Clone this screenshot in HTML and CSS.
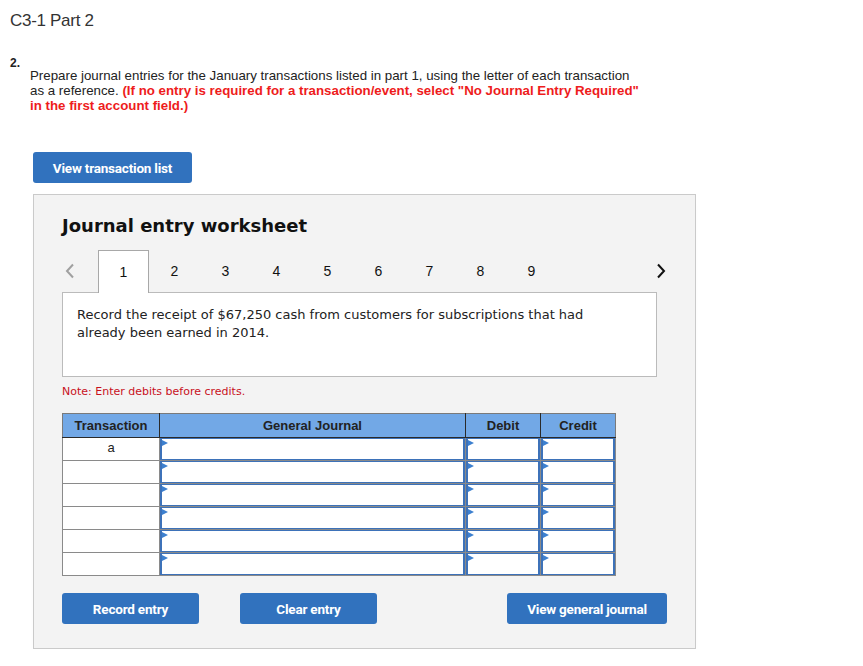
FILE: index.html
```html
<!DOCTYPE html>
<html>

<head>
    <link rel="stylesheet" href="styles.css">
</head>

<body>
    <h1 class="title">C3-1 Part 2</h1>

    <div class="question">
        <div class="qnum">2.</div>
        <p class="qtext">Prepare journal entries for the January transactions listed in part 1, using the letter of each transaction<br>
            as a reference. <strong class="warn">(If no entry is required for a transaction/event, select "No Journal Entry Required"<br>
            in the first account field.)</strong></p>
    </div>

    <button class="btn btn-list">View transaction list</button>

    <div class="worksheet">
        <h2 class="ws-title">Journal entry worksheet</h2>

        <div class="tabs">
            <span class="arrow prev">
                <svg width="10" height="16" viewBox="0 0 10 16"><polyline points="8,1.5 2,8 8,14.5" fill="none" stroke="#a0a0a0" stroke-width="2"/></svg>
            </span>
            <span class="tab active">1</span>
            <span class="tab">2</span>
            <span class="tab">3</span>
            <span class="tab">4</span>
            <span class="tab">5</span>
            <span class="tab">6</span>
            <span class="tab">7</span>
            <span class="tab">8</span>
            <span class="tab">9</span>
            <span class="arrow next">
                <svg width="10" height="16" viewBox="0 0 10 16"><polyline points="2,1.5 8,8 2,14.5" fill="none" stroke="#111" stroke-width="2"/></svg>
            </span>
        </div>

        <div class="task">
            Record the receipt of $67,250 cash from customers for subscriptions that had<br>
            already been earned in 2014.
        </div>

        <div class="note">Note: Enter debits before credits.</div>

        <table class="journal">
            <thead>
                <tr>
                    <th class="c-trans">Transaction</th>
                    <th class="c-acct">General Journal</th>
                    <th class="c-amt">Debit</th>
                    <th class="c-amt">Credit</th>
                </tr>
            </thead>
            <tbody id="rows"></tbody>
        </table>

        <div class="actions">
            <button class="btn">Record entry</button>
            <button class="btn">Clear entry</button>
            <button class="btn btn-right">View general journal</button>
        </div>
    </div>

    <script>
        const rows = document.getElementById('rows');
        for (let i = 0; i < 6; i++) {
            const tr = document.createElement('tr');
            tr.innerHTML =
                '<td class="trans">' + (i === 0 ? 'a' : '') + '</td>' +
                '<td class="cell"><div class="field"></div></td>' +
                '<td class="cell"><div class="field"></div></td>' +
                '<td class="cell"><div class="field"></div></td>';
            rows.appendChild(tr);
        }
    </script>
</body>

</html>
```

FILE: styles.css
```css
body {
    margin: 0;
    font-family: "Liberation Sans", Arial, sans-serif;
    color: #222;
    background: #fff;
}

.title {
    margin: 0;
    padding: 10px 0 0 10px;
    font-size: 17px;
    font-weight: normal;
    line-height: 22px;
    color: #333;
    letter-spacing: -0.3px;
}

.question {
    padding: 26px 0 0 10px;
}

.qnum {
    font-size: 12px;
    font-weight: bold;
    line-height: 10px;
}

.qtext {
    margin: 0 0 0 20px;
    font-size: 13.3px;
    line-height: 15px;
    white-space: nowrap;
    color: #222;
}

.warn {
    color: #ee1c1c;
}

.btn {
    height: 31px;
    border: none;
    border-radius: 3px;
    background: #3172be;
    color: #fff;
    font-family: Roboto, "Liberation Sans", sans-serif;
    font-size: 13.5px;
    font-weight: bold;
    letter-spacing: -0.2px;
    cursor: pointer;
}

.btn-list {
    display: block;
    width: 159px;
    margin: 39px 0 0 33px;
}

.worksheet {
    width: 605px;
    margin: 11px 0 0 33px;
    padding: 19px 28px 24px 28px;
    background: #f3f3f3;
    border: 1px solid #cacaca;
    box-shadow: 0 6px 8px -4px rgba(0, 0, 0, 0.06);
}

.ws-title {
    margin: 0;
    font-family: "DejaVu Sans", Verdana, sans-serif;
    font-size: 18px;
    line-height: 24px;
    color: #111;
}

.tabs {
    display: flex;
    align-items: stretch;
    height: 42px;
    margin-top: 12px;
    width: 605px;
    position: relative;
    z-index: 1;
}

.arrow {
    display: flex;
    align-items: center;
    justify-content: center;
}

.prev {
    width: 16px;
    margin-right: 20px;
}

.next {
    margin-left: auto;
    width: 12px;
}

.tab {
    width: 51px;
    display: flex;
    align-items: center;
    justify-content: center;
    font-size: 14px;
    color: #111;
    box-sizing: border-box;
}

.tab.active {
    background: #fff;
    border: 1px solid #a8a8a8;
    border-bottom: none;
    height: 43px;
}

.task {
    width: 595px;
    min-height: 85px;
    box-sizing: border-box;
    padding: 13px 14px 0;
    background: #fff;
    border: 1px solid #bbbbbb;
    font-family: "DejaVu Sans", Verdana, sans-serif;
    font-size: 13px;
    line-height: 18px;
    color: #222;
}

.note {
    margin-top: 8px;
    font-family: "DejaVu Sans", Verdana, sans-serif;
    font-size: 11px;
    line-height: 14px;
    color: #c8101c;
}

.journal {
    margin-top: 14px;
    border-collapse: collapse;
    width: 551px;
    table-layout: fixed;
    border: 1px solid #7a7a7a;
}

.journal th {
    height: 23px;
    padding: 0;
    background: #72a8e6;
    border: 1px solid #2a2a2a;
    border-top-color: #7a7a7a;
    font-size: 13px;
    font-weight: bold;
    color: #222;
}

.journal th:first-child {
    border-left-color: #7a7a7a;
}

.journal th:last-child {
    border-right-color: #7a7a7a;
}

.c-trans {
    width: 96px;
}

.c-acct {
    width: 305px;
}

.c-amt {
    width: 74px;
}

.journal td {
    height: 22px;
    padding: 0;
    border: 1px solid #8a8a8a;
    background: #fff;
}

.trans {
    text-align: center;
    vertical-align: top;
    font-size: 13px;
    line-height: 20px;
    color: #222;
}

.field {
    position: relative;
    height: 22px;
    box-sizing: border-box;
    border: 2px solid #3d72b9;
    border-top-width: 1px;
    border-bottom-width: 1px;
}

.field::before {
    content: "";
    position: absolute;
    left: 0;
    top: 1px;
    border-left: 6px solid #3d80cf;
    border-top: 3.5px solid transparent;
    border-bottom: 3.5px solid transparent;
}

.actions {
    display: flex;
    gap: 41px;
    margin-top: 17px;
}

.actions .btn {
    width: 137px;
}

.actions .btn-right {
    width: 160px;
    margin-left: auto;
}
```
